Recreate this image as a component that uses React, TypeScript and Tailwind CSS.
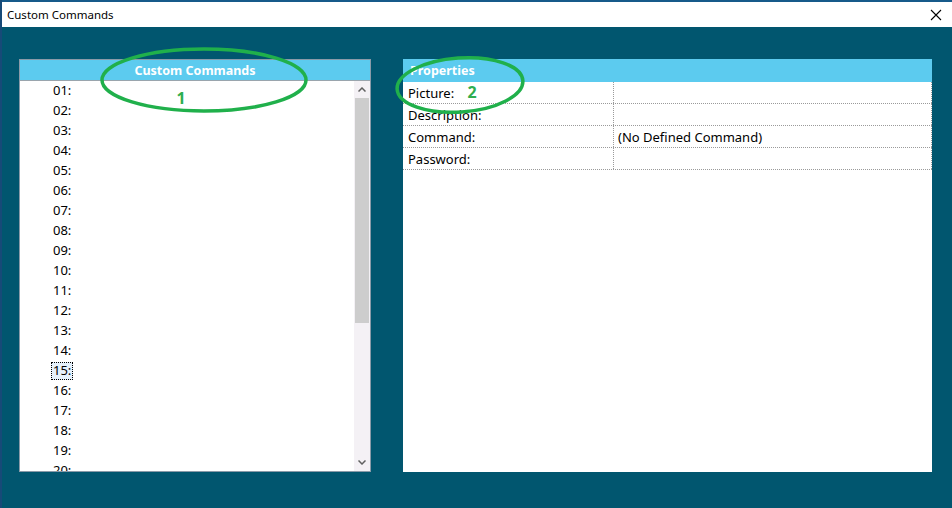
import React from 'react';

const rows = Array.from({ length: 20 }, (_, i) => String(i + 1).padStart(2, '0') + ':');

const props = [
  { label: 'Picture:', value: '' },
  { label: 'Description:', value: '' },
  { label: 'Command:', value: '(No Defined Command)' },
  { label: 'Password:', value: '' },
];

export default function App() {
  return (
    <div
      className="relative w-[952px] h-[508px] overflow-hidden bg-[#01566f] border-l-2 border-[#174a78] flex flex-col text-[13px] text-black"
      style={{ fontFamily: '"Noto Sans", "Open Sans", sans-serif' }}
    >
      {/* window top edge */}
      <div className="h-[2px] bg-[#175a8a]" />
      {/* title bar */}
      <div className="h-[25px] bg-white flex items-center justify-between pl-[5px] pr-[8px]">
        <span className="text-[11.5px] leading-none">Custom Commands</span>
        <svg width="12" height="12" viewBox="0 0 12 12" className="mr-[2px]">
          <path d="M1 1 L11 11 M11 1 L1 11" stroke="#000" strokeWidth="1.1" />
        </svg>
      </div>

      <div className="flex gap-[32px] pl-[17px] pt-[32px]">
        {/* left panel */}
        <div className="w-[352px] h-[413px] flex flex-col bg-white border border-[#8a9aa8]">
          <div className="h-[21px] bg-[#5ccbef] flex items-center justify-center pt-[2px] text-[12.5px] text-white font-bold border-b border-[#9aa5ad]">
            Custom Commands
          </div>
          <div className="flex flex-1 overflow-hidden">
            <div className="flex-1 flex flex-col pl-[33px] overflow-hidden">
              {rows.map((r) => (
                <div key={r} className="h-[20px] shrink-0 flex items-center">
                  {r === '15:' ? (
                    <span className="px-[1px] h-[18px] flex items-center bg-[#e6f1fb] border border-dotted border-black -ml-[2px]">
                      {r}
                    </span>
                  ) : (
                    <span>{r}</span>
                  )}
                </div>
              ))}
            </div>
            {/* scrollbar */}
            <div className="w-[16px] bg-[#f4f1f5] flex flex-col">
              <div className="h-[17px] flex items-center justify-center">
                <svg width="8" height="5" viewBox="0 0 8 5">
                  <path d="M0.5 4.5 L4 1 L7.5 4.5" stroke="#606060" strokeWidth="1.5" fill="none" />
                </svg>
              </div>
              <div className="h-[225px] bg-[#cdcdcd] mx-[1px]" />
              <div className="flex-1" />
              <div className="h-[17px] flex items-center justify-center">
                <svg width="8" height="5" viewBox="0 0 8 5">
                  <path d="M0.5 0.5 L4 4 L7.5 0.5" stroke="#606060" strokeWidth="1.5" fill="none" />
                </svg>
              </div>
            </div>
          </div>
        </div>

        {/* right panel */}
        <div className="w-[529px] h-[413px] bg-white flex flex-col">
          <div className="h-[23px] bg-[#5ccbef] flex items-center pl-[7px] pt-[2px] text-[12.5px] text-white font-bold">Properties</div>
          {props.map((p) => (
            <div key={p.label} className="h-[22px] flex border-b border-dotted border-[#9a9a9a]">
              <div className="w-[211px] pl-[5px] pt-[2px] flex items-center border-r border-dotted border-[#9a9a9a]">{p.label}</div>
              <div className="flex-1 pl-[4px] pt-[2px] flex items-center border-r border-dotted border-[#9a9a9a]">{p.value}</div>
            </div>
          ))}
        </div>
      </div>

      {/* annotation overlay */}
      <svg className="absolute left-0 top-0 pointer-events-none" width="952" height="508" viewBox="0 0 952 508">
        <ellipse cx="202" cy="80" rx="102" ry="31" fill="none" stroke="#20b04b" strokeWidth="3.5" />
        <ellipse cx="458" cy="85" rx="63" ry="27" fill="none" stroke="#20b04b" strokeWidth="3.5" transform="rotate(-4 458 85)" />
        <text x="179" y="104" textAnchor="middle" fill="#2eae4f" fontSize="16" fontWeight="bold" fontFamily="Noto Sans, sans-serif">1</text>
        <text x="470" y="98" textAnchor="middle" fill="#2eae4f" fontSize="16" fontWeight="bold" fontFamily="Noto Sans, sans-serif">2</text>
      </svg>
    </div>
  );
}
